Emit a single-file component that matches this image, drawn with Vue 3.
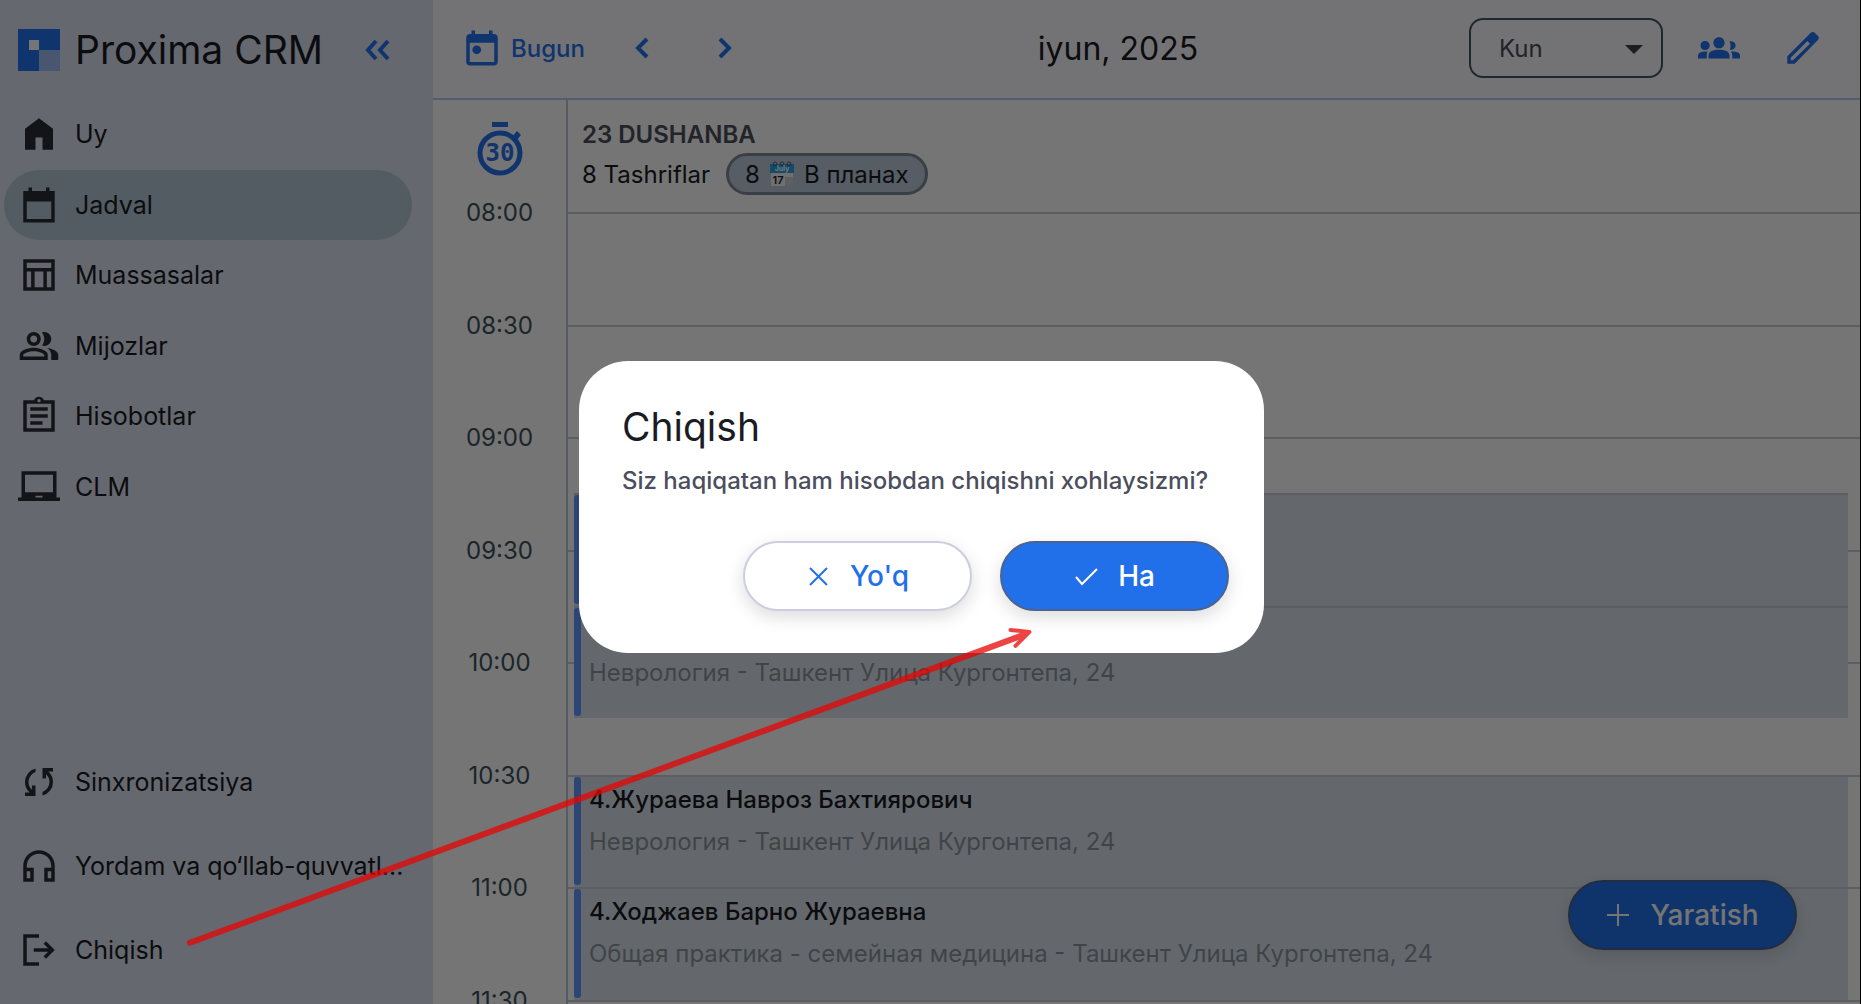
<script setup>
import { ref } from 'vue'

// Icon paths on a 24x24 grid
const icons = {
  home: 'M4 21V9l8-6 8 6v12h-6v-7h-4v7z',
  calendar: 'M3 22V4h3V2h2v2h8V2h2v2h3v18zM5 20h14V10H5z',
  table: 'M3 21V3h18v18zM5 8h14V5H5zM5 19h2.5v-9H5zm4.5 0h5v-9h-5zm7 0H19v-9h-2.5z',
  people: 'M16.67 13.13C18.04 14.06 19 15.32 19 17v3h4v-3c0-2.18-3.57-3.47-6.33-3.87zM15 12c2.21 0 4-1.79 4-4s-1.79-4-4-4c-.47 0-.91.1-1.33.24C14.5 5.27 15 6.58 15 8s-.5 2.73-1.33 3.76c.42.14.86.24 1.33.24zM9 12c2.21 0 4-1.79 4-4s-1.79-4-4-4-4 1.79-4 4 1.79 4 4 4zm0-6c1.1 0 2 .9 2 2s-.9 2-2 2-2-.9-2-2 .9-2 2-2zm0 7c-2.67 0-8 1.34-8 4v3h16v-3c0-2.66-5.33-4-8-4zm6 5H3v-.99C3.2 16.29 6.3 15 9 15s5.8 1.28 6 2z',
  clipboard: 'M7 15h7v2H7zm0-4h10v2H7zm0-4h10v2H7zM3 21V3h6.18C9.6 1.84 10.7 1 12 1s2.4.84 2.82 2H21v18zM5 19h14V5H5zm7-14.8a.95.95 0 1 0 0-1.9.95.95 0 0 0 0 1.9z',
  laptop: 'M22 18V3H2v15H0v2h24v-2zm-8 0h-4v-1h4zM20 15H4V5h16z',
  sync: 'M4 20v-2h2.75l-.4-.35q-1.3-1.15-1.825-2.625T4 12.05q0-2.775 1.663-4.938T10 4.25v2.1Q8.2 7 7.1 8.563T6 12.05q0 1.125.425 2.188T7.75 16.2l.25.25V14h2v6zm10-.25v-2.1q1.8-.65 2.9-2.212T18 11.95q0-1.125-.425-2.187T16.25 7.8L16 7.55V10h-2V4h6v2h-2.75l.4.35q1.225 1.225 1.788 2.663T20 11.95q0 2.775-1.662 4.938T14 19.75z',
  headphones: 'M3 21v-9q0-1.875.713-3.512t1.924-2.85 2.85-1.925T12 3t3.513.713 2.85 1.925 1.925 2.85T21 12v9h-6v-8h4v-1q0-2.925-2.037-4.962T12 5 7.038 7.038 5 12v1h4v8zM5 19h2v-4H5zm12 0h2v-4h-2z',
  logout: 'M3 21V3h9v2H5v14h7v2zm13-4-1.375-1.45 2.55-2.55H9v-2h8.175l-2.55-2.55L16 7l5 5z',
  today: 'M19 4h-1V2h-2v2H8V2H6v2H5c-1.1 0-2 .9-2 2v14c0 1.1.9 2 2 2h14c1.1 0 2-.9 2-2V6c0-1.1-.9-2-2-2zm0 16H5V9h14zM9 10.5a2.5 2.5 0 1 0 0 5 2.5 2.5 0 0 0 0-5z',
  groups: 'M4 13.2c1.5 0 2.7-1.1 2.7-2.6S5.5 8 4 8s-2.6 1.1-2.6 2.6S2.500 13.200 4 13.200zM5.500 14.200c-.5-.15-1-.2-1.500-.2-1 0-1.900.2-2.800.6A2 2 0 0 0 0 16.400V18h5v-1.600c0-.8.100-1.500.5-2.200zM18.200 13c1.300.3 3.300-.8 3.300-2.500s-1.900-2.700-3.500-2.200c.7 1.500.9 3.200.2 4.700zM24 16.400c0-.8-.5-1.500-1.200-1.800-1.200-.5-2.600-.7-3.900-.5.500.7.700 1.500.7 2.300V18H24zM16.200 13.700c-1.200-.5-2.600-.7-4.200-.7s-3 .2-4.200.7A3 3 0 0 0 6 16.400V18h12v-1.600c0-1.200-.7-2.200-1.800-2.700zM8.800 9c0 1.800 1.400 3.200 3.200 3.200s3.200-1.400 3.200-3.200S13.800 5.900 12 5.900 8.800 7.200 8.800 9z',
  edit: 'M3 21v-4.250L16.600 3.200q.6-.4 1.200-.3.500 0 1 .5L20.500 5q.5.500.5 1.200 0 .7-.5 1.200L7.250 21zM5 19h1.300L16 9.500 14.500 8 5 17.600z'
}

const menu = [
  { icon: 'home', label: 'Uy' },
  { icon: 'calendar', label: 'Jadval' },
  { icon: 'table', label: 'Muassasalar' },
  { icon: 'people', label: 'Mijozlar' },
  { icon: 'clipboard', label: 'Hisobotlar' },
  { icon: 'laptop', label: 'CLM' }
]

const footerMenu = [
  { icon: 'sync', label: 'Sinxronizatsiya' },
  { icon: 'headphones', label: 'Yordam va qo‘llab-quvvatl...' },
  { icon: 'logout', label: 'Chiqish' }
]

const times = ['08:00', '08:30', '09:00', '09:30', '10:00', '10:30', '11:00', '11:30']

// start and length are in hours, counted from 08:00
const visits = [
  { start: 1.25, length: 0.5, name: '', place: '' },
  { start: 1.75, length: 0.5, name: '', place: 'Неврология - Ташкент Улица Кургонтепа, 24' },
  { start: 2.5, length: 0.5, name: '4.Жураева Навроз Бахтиярович', place: 'Неврология - Ташкент Улица Кургонтепа, 24' },
  { start: 3, length: 0.5, name: '4.Ходжаев Барно Жураевна', place: 'Общая практика - семейная медицина - Ташкент Улица Кургонтепа, 24' }
]

const HOUR = 225

const active = ref('Jadval')
const view = ref('Kun')
const dialogOpen = ref(true)

function visitStyle(visit) {
  return {
    top: visit.start * HOUR + 'px',
    height: visit.length * HOUR + 'px'
  }
}

function selectFooter(label) {
  if (label === 'Chiqish') dialogOpen.value = true
}
</script>

<template>
  <div class="app">
    <!-- Sidebar -->
    <aside class="sidebar">
      <div class="brand">
        <svg class="logo" viewBox="0 0 42 42">
          <path fill="#2371ee" d="M0 0h42v21H21v21H0z" />
          <path fill="#9dbbf3" d="M21 21h21v21H21z" />
          <path fill="#fff" d="M11 11h10v10H11z" />
        </svg>
        <span class="brand-name">Proxima CRM</span>
        <button class="icon-btn collapse" aria-label="Yig‘ish">
          <svg class="stroke-icon" viewBox="0 0 26 22"><path d="M11 2 3 11l8 9M23 2l-8 9 8 9" /></svg>
        </button>
      </div>

      <nav class="menu menu-main">
        <a
          v-for="item in menu"
          :key="item.label"
          href="#"
          class="menu-item"
          :class="{ active: active === item.label }"
          @click.prevent="active = item.label"
        >
          <svg class="icon" viewBox="0 0 24 24"><path fill-rule="evenodd" :d="icons[item.icon]" /></svg>
          <span class="menu-label">{{ item.label }}</span>
        </a>
      </nav>

      <nav class="menu menu-footer">
        <a
          v-for="item in footerMenu"
          :key="item.label"
          href="#"
          class="menu-item"
          @click.prevent="selectFooter(item.label)"
        >
          <svg class="icon" viewBox="0 0 24 24"><path fill-rule="evenodd" :d="icons[item.icon]" /></svg>
          <span class="menu-label">{{ item.label }}</span>
        </a>
      </nav>
    </aside>

    <!-- Schedule -->
    <main class="main">
      <header class="topbar">
        <button class="today">
          <svg class="icon" viewBox="0 0 24 24"><path fill-rule="evenodd" :d="icons.today" /></svg>
          Bugun
        </button>
        <button class="icon-btn nav-btn" aria-label="Oldingi">
          <svg class="stroke-icon arrow" viewBox="0 0 16 24"><path d="M13 3 4 12l9 9" /></svg>
        </button>
        <button class="icon-btn nav-btn" aria-label="Keyingi">
          <svg class="stroke-icon arrow" viewBox="0 0 16 24"><path d="m3 3 9 9-9 9" /></svg>
        </button>
        <h1 class="month">iyun, 2025</h1>
        <div class="select-box">
          <select v-model="view" class="select" aria-label="Ko‘rinish">
            <option>Kun</option>
          </select>
          <svg class="caret" viewBox="0 0 18 10"><path d="M0 0h18l-9 9z" /></svg>
        </div>
        <button class="icon-btn" aria-label="Guruh">
          <svg class="icon" viewBox="0 0 24 24"><path :d="icons.groups" /></svg>
        </button>
        <button class="icon-btn" aria-label="Tahrirlash">
          <svg class="icon" viewBox="0 0 24 24"><path fill-rule="evenodd" :d="icons.edit" /></svg>
        </button>
      </header>

      <div class="schedule">
        <div class="time-column">
          <button class="icon-btn timer" aria-label="30 daqiqa">
            <svg class="timer-icon" viewBox="0 0 48 56">
              <circle cx="24" cy="32" r="20" fill="none" stroke="currentColor" stroke-width="5" />
              <path d="M16 1h16v5H16z" />
              <path d="m36 16 5-6 4 4-5 6z" />
              <text x="24" y="40" text-anchor="middle">30</text>
            </svg>
          </button>
          <div v-for="time in times" :key="time" class="time">{{ time }}</div>
        </div>

        <div class="day">
          <div class="day-header">
            <div class="day-name">23 DUSHANBA</div>
            <div class="day-stats">
              <span>8 Tashriflar</span>
              <span class="chip">
                8
                <svg class="emoji" viewBox="0 0 24 26">
                  <path fill="#f3f3f3" d="M1 8h22v17H1z" />
                  <path fill="#cfcfcf" d="M15 16h8v9h-8z" />
                  <path fill="#2aa3ec" d="M0 3h24v9H0z" />
                  <g fill="none" stroke="#55606b" stroke-width="1">
                    <circle cx="5" cy="3" r="2" />
                    <circle cx="12" cy="3" r="2" />
                    <circle cx="19" cy="3" r="2" />
                  </g>
                  <text x="12" y="10" class="emoji-month">July</text>
                  <text x="8" y="23" class="emoji-day">17</text>
                </svg>
                В планах
              </span>
            </div>
          </div>

          <div class="slots">
            <div v-for="hour in 4" :key="hour" class="hour">
              <div class="slot"></div>
              <div class="slot"></div>
            </div>
            <article
              v-for="visit in visits"
              :key="visit.start"
              class="visit"
              :style="visitStyle(visit)"
            >
              <div class="visit-name">{{ visit.name }}</div>
              <div class="visit-place">{{ visit.place }}</div>
            </article>
          </div>
        </div>
      </div>

      <button class="btn btn-primary create">
        <svg class="btn-icon" viewBox="0 0 24 24"><path d="M12 1v22M1 12h22" /></svg>
        Yaratish
      </button>
    </main>

    <!-- Logout dialog -->
    <div v-if="dialogOpen" class="overlay">
      <div class="dialog" role="dialog" aria-labelledby="dialog-title">
        <h2 id="dialog-title" class="dialog-title">Chiqish</h2>
        <p class="dialog-text">Siz haqiqatan ham hisobdan chiqishni xohlaysizmi?</p>
        <div class="dialog-actions">
          <button class="btn btn-outline" @click="dialogOpen = false">
            <svg class="btn-icon" viewBox="0 0 24 24"><path d="m4 4 17 17M21 4 4 21" /></svg>
            Yo'q
          </button>
          <button class="btn btn-primary" @click="dialogOpen = false">
            <svg class="btn-icon" viewBox="0 0 24 24"><path d="m2 13 6 7L23 5" /></svg>
            Ha
          </button>
        </div>
      </div>
    </div>

    <!-- Pointer from the menu item to the confirm button -->
    <svg v-if="dialogOpen" class="pointer" viewBox="0 0 1861 1004">
      <g fill="none" stroke="#e90303" stroke-linecap="round" stroke-linejoin="round">
        <path stroke-width="6" d="M190 943 1024 635" />
        <path stroke-width="4" d="m1011 630 19 2-14 14" />
      </g>
    </svg>
  </div>
</template>

<style>
body {
  margin: 0;
}
</style>

<style scoped>
.app {
  position: relative;
  display: flex;
  height: 100vh;
  overflow: hidden;
  box-sizing: border-box;
  border-right: 1px solid #000;
  background: #fff;
  color: #1a1c24;
  font-family: Inter, sans-serif;
  font-size: 24px;
}

button {
  border: none;
  background: none;
  padding: 0;
  font-family: inherit;
  cursor: pointer;
}

svg {
  display: block;
  flex: none;
  fill: currentColor;
}

.icon {
  width: 42px;
  height: 42px;
}

.stroke-icon {
  fill: none;
  stroke: currentColor;
  stroke-width: 4;
}

.icon-btn {
  display: flex;
  align-items: center;
  justify-content: center;
  color: #2371ee;
}

/* Sidebar */
.sidebar {
  display: flex;
  flex: none;
  flex-direction: column;
  box-sizing: border-box;
  width: 433px;
  padding-bottom: 12px;
  background: #dfe2f1;
}

.brand {
  display: flex;
  align-items: center;
  height: 99px;
  padding: 0 42px 0 18px;
}

.logo {
  width: 42px;
  height: 42px;
}

.brand-name {
  flex: 1;
  margin-left: 15px;
  font-size: 39px;
}

.collapse .stroke-icon {
  width: 26px;
  height: 22px;
}

.menu {
  display: grid;
  padding-right: 21px;
  padding-left: 4px;
}

.menu-main {
  grid-auto-rows: 1fr;
  height: 423px;
}

.menu-item {
  display: flex;
  align-items: center;
  box-sizing: border-box;
  min-width: 0;
  min-height: 70px;
  padding: 0 8px 0 14px;
  border-radius: 35px;
  color: #2b2d34;
  text-decoration: none;
}

.menu-item.active {
  background: #b2c8d5;
}

.menu-label {
  margin-left: 15px;
  color: #1a1c24;
  font-size: 25px;
  white-space: nowrap;
}

.menu-footer {
  gap: 14px;
  margin-top: auto;
  padding-bottom: 7px;
}

/* Top bar */
.main {
  position: relative;
  display: flex;
  flex: 1;
  flex-direction: column;
  min-width: 0;
}

.topbar {
  display: flex;
  flex: none;
  align-items: center;
  box-sizing: border-box;
  height: 100px;
  padding: 0 36px 2px 28px;
  border-bottom: 2px solid #b3cbf1;
  background: #fbfafe;
}

.today {
  display: flex;
  align-items: center;
  gap: 8px;
  color: #2371ee;
  font-size: 24px;
  font-weight: 500;
}

.nav-btn {
  width: 83px;
}

.today + .nav-btn {
  margin-left: 16px;
}

.arrow {
  width: 16px;
  height: 24px;
}

.month {
  flex: 1;
  margin: 0;
  font-size: 32px;
  font-weight: 400;
  text-align: center;
}

.select-box {
  position: relative;
  margin-right: 35px;
}

.select {
  display: block;
  box-sizing: border-box;
  width: 194px;
  height: 60px;
  padding: 0 28px;
  border: 2px solid #425b66;
  border-radius: 14px;
  background: transparent;
  color: #4b4e58;
  font-family: inherit;
  font-size: 24px;
  appearance: none;
}

.caret {
  position: absolute;
  top: 27px;
  right: 20px;
  width: 18px;
  height: 10px;
  color: #3c3f48;
  pointer-events: none;
}

.select-box ~ .icon-btn + .icon-btn {
  margin-left: 42px;
}

/* Schedule */
.schedule {
  display: flex;
  flex: 1;
  min-height: 0;
  overflow: hidden;
}

.time-column {
  flex: none;
  width: 133px;
  color: #3d525b;
  font-size: 24px;
  line-height: 30px;
  text-align: center;
}

.timer {
  width: 100%;
  height: 98px;
}

.timer-icon {
  width: 48px;
  height: 56px;
}

.timer-icon text {
  font-family: 'DejaVu Sans Mono', monospace;
  font-size: 24px;
  font-weight: 700;
}

.time {
  height: calc(225px / 2);
}

.day {
  flex: 1;
  min-width: 0;
  border-left: 2px solid #c0c4d3;
}

.day-header {
  box-sizing: border-box;
  height: 112px;
  padding: 18px 14px 0;
}

.day-name {
  color: #4b4f5c;
  font-weight: 600;
  line-height: 34px;
}

.day-stats {
  display: flex;
  align-items: center;
  gap: 16px;
  margin-top: 1px;
}

.chip {
  display: flex;
  align-items: center;
  gap: 10px;
  box-sizing: border-box;
  height: 42px;
  padding: 0 16px;
  border: 3px solid #7f8a99;
  border-radius: 21px;
  background: #bccadb;
}

.emoji {
  width: 24px;
  height: 26px;
}

.emoji-month {
  fill: #fff;
  font-size: 7px;
  font-weight: 700;
  text-anchor: middle;
}

.emoji-day {
  fill: #222;
  font-size: 11px;
  font-weight: 600;
  text-anchor: middle;
}

.slots {
  position: relative;
}

.hour {
  display: grid;
  grid-template-rows: 1fr 1fr;
  height: 225px;
}

.slot {
  border-top: 2px solid #c8ccda;
}

.visit {
  position: absolute;
  right: 12px;
  left: 6px;
  box-sizing: border-box;
  padding: 2px 14px 0 15px;
  border-top: 2px solid #c8ccda;
  background: #dae3eb;
}

.visit::before {
  content: '';
  position: absolute;
  top: 0;
  bottom: 2px;
  left: 0;
  width: 7px;
  border-radius: 3px;
  background: #6297ff;
}

.visit-name,
.visit-place {
  height: 42px;
  overflow: hidden;
  font-weight: 500;
  line-height: 42px;
  white-space: nowrap;
}

.visit-place {
  color: #8f949c;
  font-weight: 400;
}

/* Buttons */
.btn {
  display: flex;
  align-items: center;
  justify-content: center;
  gap: 20px;
  box-sizing: border-box;
  width: 229px;
  height: 70px;
  border: 2px solid #cbcee0;
  border-radius: 35px;
  box-shadow: 0 6px 18px rgba(0, 0, 0, 0.14);
  font-size: 28px;
  font-weight: 500;
}

.btn-icon {
  width: 24px;
  height: 24px;
  fill: none;
  stroke: currentColor;
  stroke-width: 2;
}

.btn-primary {
  border-color: #4a6391;
  background: #2170ea;
  color: #fff;
}

.btn-outline {
  background: #fff;
  color: #2170ea;
}

.create {
  position: absolute;
  right: 63px;
  bottom: 54px;
}

/* Dialog */
.overlay {
  position: absolute;
  inset: 0 -1px 0 0;
  display: flex;
  align-items: center;
  justify-content: center;
  box-sizing: border-box;
  padding: 9px 18px 0 0;
  background: rgba(0, 0, 0, 0.54);
}

.dialog {
  box-sizing: border-box;
  min-width: 685px;
  padding: 43px 35px 42px 43px;
  border-radius: 49px;
  background: #fff;
}

.dialog-title {
  margin: 0;
  font-size: 39px;
  font-weight: 400;
  line-height: 46px;
}

.dialog-text {
  margin: 13px 0 42px;
  color: #4b4e5c;
  font-weight: 500;
  line-height: 36px;
}

.dialog-actions {
  display: flex;
  justify-content: flex-end;
  gap: 28px;
}

/* Pointer */
.pointer {
  position: absolute;
  inset: 0;
  width: 100%;
  height: 100%;
  opacity: 0.74;
  pointer-events: none;
}
</style>
